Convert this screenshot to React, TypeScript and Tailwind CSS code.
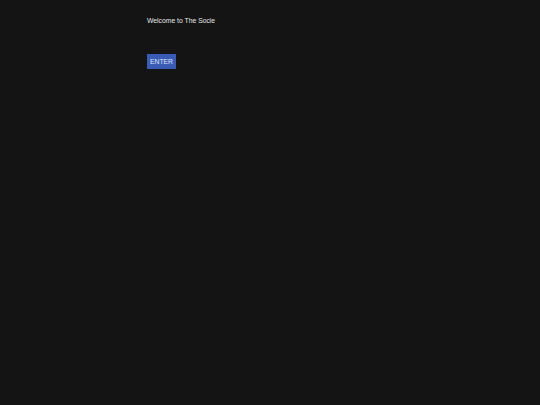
export default function App() {
  return (
    <div className="min-h-[405px] w-full bg-[#141414] font-['Liberation_Sans',Arial,sans-serif] text-[#e6e6e6]">
      <div className="flex flex-col items-start pl-[147px] pt-[17px]">
        <p className="text-[6.8px] leading-[8px]">Welcome to The Socie</p>
        <button className="mt-[29px] h-[15px] w-[29px] bg-[#3a5bb5] text-[6.8px] leading-[15px] text-[#dfe6f7]">
          ENTER
        </button>
      </div>
    </div>
  );
}
